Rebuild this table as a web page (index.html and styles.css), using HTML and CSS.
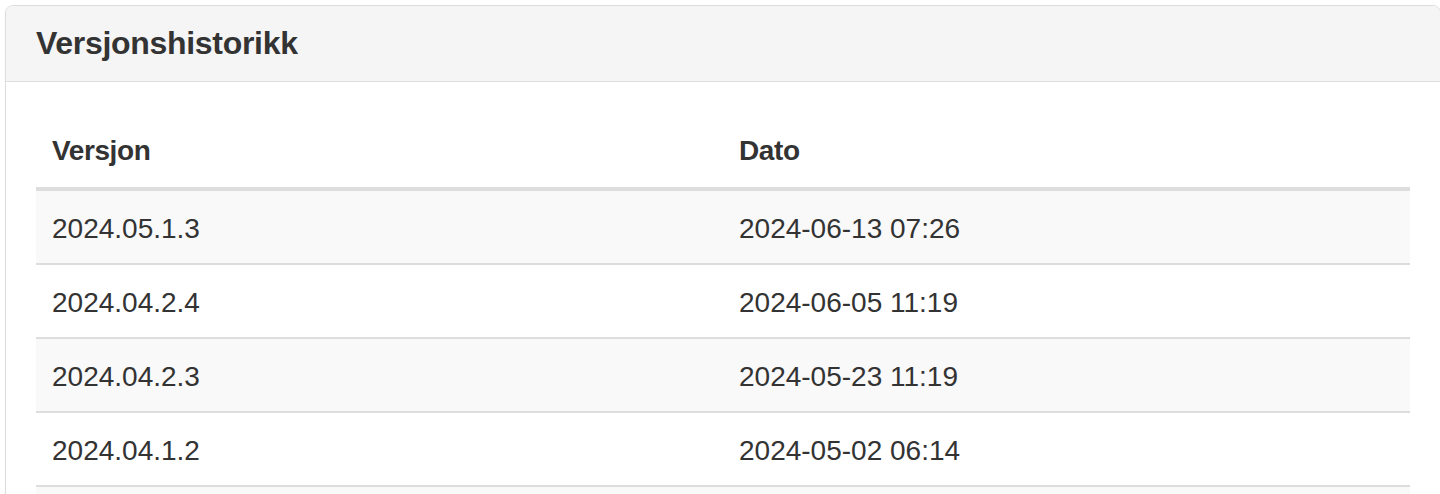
FILE: index.html
```html
<!DOCTYPE html>
<html lang="no">
<head>
<meta charset="utf-8">
<title>Versjonshistorikk</title>
<link rel="stylesheet" href="styles.css">
</head>
<body>
<div class="panel">
  <div class="panel-heading">
    <h3 class="panel-title">Versjonshistorikk</h3>
  </div>
  <div class="panel-body">
    <table class="table">
      <thead>
        <tr><th>Versjon</th><th>Dato</th></tr>
      </thead>
      <tbody>
        <tr><td>2024.05.1.3</td><td>2024-06-13 07:26</td></tr>
        <tr><td>2024.04.2.4</td><td>2024-06-05 11:19</td></tr>
        <tr><td>2024.04.2.3</td><td>2024-05-23 11:19</td></tr>
        <tr><td>2024.04.1.2</td><td>2024-05-02 06:14</td></tr>
        <tr><td>2024.04.1.1</td><td>2024-04-25 08:02</td></tr>
      </tbody>
    </table>
  </div>
</div>
</body>
</html>
```

FILE: styles.css
```css
html, body {
  margin: 0;
  padding: 0;
  background: #fff;
  overflow: hidden;
}
body {
  padding: 5px 0 0 5px;
  font-family: "Liberation Sans", Arial, Helvetica, sans-serif;
  font-size: 28px;
  line-height: 1.42857;
  color: #333;
}
.panel {
  margin-right: -1px;
  border: 1px solid #ddd;
  border-radius: 8px;
  background: #fff;
  box-shadow: 0 1px 2px rgba(0,0,0,0.05);
}
.panel-heading {
  background: #f5f5f5;
  border-bottom: 1px solid #ddd;
  border-radius: 7px 7px 0 0;
  padding: 20px 30px;
}
.panel-title {
  margin: 0;
  font-size: 32px;
  line-height: 1.1;
  font-weight: bold;
  color: #333;
  letter-spacing: -0.3px;
}
.panel-body {
  padding: 30px;
}
.table {
  width: 100%;
  border-collapse: collapse;
  border-spacing: 0;
}
.table th,
.table td {
  width: 50%;
  text-align: left;
  vertical-align: top;
  line-height: 1.42857;
}
.table th {
  padding: 19px 16px 16px;
  font-weight: bold;
  border-bottom: 4px solid #ddd;
  letter-spacing: -0.4px;
}
.table td {
  padding: 18px 16px 14px;
  border-top: 2px solid #ddd;
}
.table tbody tr:nth-child(odd) {
  background: #f9f9f9;
}
```
